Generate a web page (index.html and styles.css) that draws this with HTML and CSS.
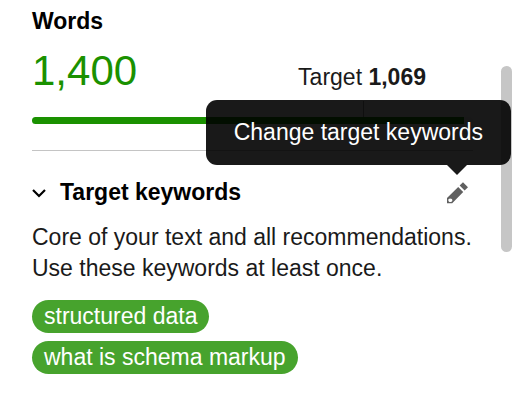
FILE: index.html
```html
<!DOCTYPE html>
<html lang="en">
<head>
<meta charset="utf-8">
<title>Words and target keywords</title>
<link rel="stylesheet" href="styles.css">
</head>
<body>
<main class="panel">
  <section class="words">
    <h2 class="title">Words</h2>
    <div class="stats">
      <span class="count">1,400</span>
      <span class="target">Target <strong>1,069</strong></span>
    </div>
    <div class="track"><div class="fill"></div><div class="mark"></div></div>
  </section>
  <section class="keywords">
    <header class="head">
      <button class="toggle" type="button" aria-expanded="true">
        <svg class="chevron" viewBox="0 0 14 14" aria-hidden="true"><path d="M1 5l6 6 6-6" fill="none" stroke="currentColor" stroke-width="2.2"/></svg>
        <span class="title">Target keywords</span>
      </button>
      <div class="edit-wrap">
        <button class="edit" type="button" aria-label="Change target keywords">
          <svg class="pencil" viewBox="0 0 22 24" aria-hidden="true"><path fill="currentColor" fill-rule="evenodd" d="M12.2 7L17.2 12 6.2 23.2H1V18zM2.4 19.2v1.8l1 1h1.8l1.2-1.2-.4-1.8-2-.6zM13.6 5.6L17 2.2 22 7.2 18.6 10.6z"/></svg>
        </button>
        <div class="tooltip" role="tooltip">Change target keywords</div>
      </div>
    </header>
    <p class="text">Core of your text and all recommendations. Use these keywords at least once.</p>
    <ul class="tags">
      <li class="tag">structured data</li>
      <li class="tag">what is schema markup</li>
    </ul>
  </section>
</main>
<div class="scrollbar"></div>
</body>
</html>
```
FILE: styles.css
```css
* { box-sizing: border-box; }
body {
  margin: 0;
  background: #fff;
  color: #1a1a1a;
  font: 23px/28px "Liberation Sans", Arial, sans-serif;
}
.panel { padding: 7px 42px 16px 32px; }
.title { margin: 0; font-size: 23px; font-weight: 700; line-height: 28px; color: #000; }
.words { padding-bottom: 26px; border-bottom: 1px solid #c4c4c4; }
.stats {
  display: flex;
  align-items: flex-end;
  justify-content: space-between;
  margin-top: 12px;
  padding-right: 47px;
}
.count { font-size: 42px; line-height: 48px; color: #1a9100; }
.target { padding-bottom: 4px; }
.track { position: relative; margin-top: 22px; height: 7px; border-radius: 4px; background: #eee; }
.fill { width: 98%; height: 100%; border-radius: 4px 0 0 4px; background: #1a9100; }
.mark { position: absolute; left: 75%; top: -16px; width: 1px; height: 16px; background: #999; }
.head { display: flex; align-items: center; justify-content: space-between; margin-top: 27px; }
button { margin: 0; padding: 0; border: 0; background: none; font: inherit; color: inherit; cursor: pointer; }
.toggle { display: flex; align-items: center; gap: 14px; color: #000; }
.chevron { width: 14px; height: 14px; }
.edit-wrap { position: relative; margin-right: 5px; }
.edit { display: block; color: #606060; }
.pencil { display: block; width: 22px; height: 24px; }
.tooltip {
  position: absolute;
  right: -43px;
  bottom: 39px;
  padding: 18px 28px 19px;
  border-radius: 11px;
  background: rgba(0, 0, 0, 0.9);
  color: #fff;
  white-space: nowrap;
  z-index: 2;
}
.tooltip::after {
  content: "";
  position: absolute;
  right: 44px;
  top: 100%;
  border: 10px solid transparent;
  border-top-color: rgba(0, 0, 0, 0.9);
  border-bottom: 0;
}
.text { margin: 16px 0; line-height: 31px; }
.tags { display: flex; flex-direction: column; align-items: flex-start; gap: 8px; margin: 0; padding: 0; list-style: none; }
.tag { padding: 0 12px; border-radius: 17px; background: #47a32d; color: #fff; line-height: 33px; }
.scrollbar { position: absolute; right: 3px; top: 66px; width: 11px; height: 186px; border-radius: 6px; background: #c6c6c6; }
```
